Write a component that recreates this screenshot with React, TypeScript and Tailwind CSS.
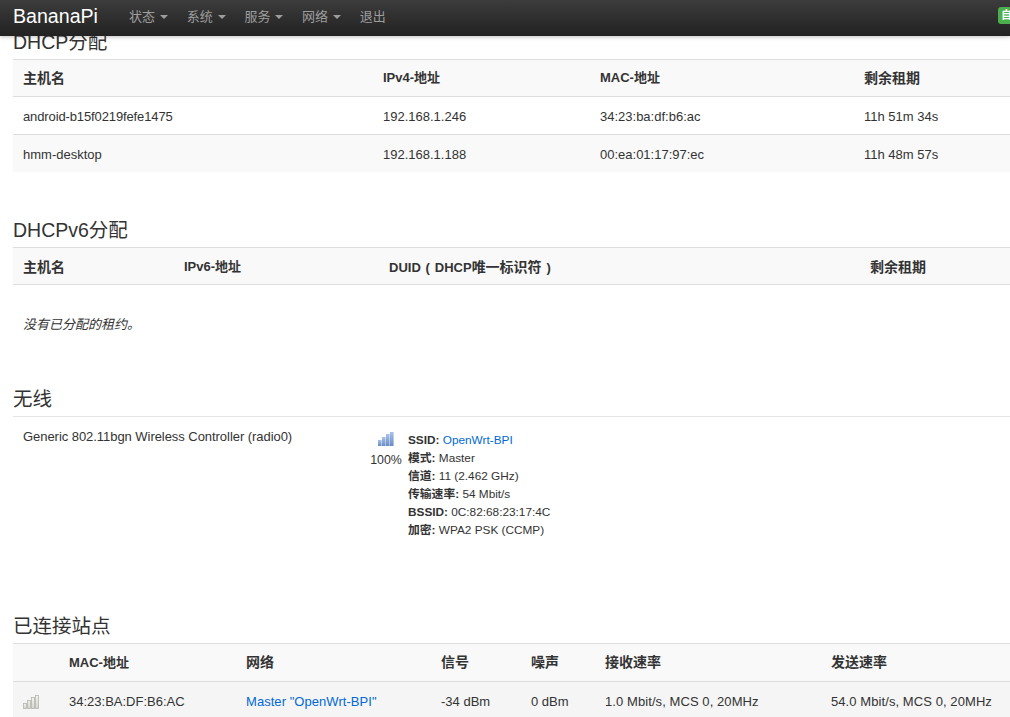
import React from "react";

const font = "font-['Liberation_Sans','Noto_Sans_CJK_SC',sans-serif]";

function Caret() {
  return <span className="ml-[5px] inline-block h-0 w-0 border-x-[4px] border-t-[4px] border-x-transparent border-t-[#9d9d9d] align-middle" />;
}

function Signal({ on }: { on: boolean }) {
  const heights = [6, 9, 12, 14];
  const id = on ? "sigOn" : "sigOff";
  return (
    <svg width="16" height="15" viewBox="0 0 16 15" className="block">
      <defs>
        <linearGradient id={id} x1="0" y1="0" x2="0" y2="1">
          <stop offset="0" stopColor={on ? "#a8c2ea" : "#f4f4f0"} />
          <stop offset="1" stopColor={on ? "#6a8cc4" : "#d2d4cc"} />
        </linearGradient>
      </defs>
      {heights.map((h, i) => (
        <rect
          key={i}
          x={i * 4 + (on ? 0 : 0.5)}
          y={15 - h + (on ? 0 : 0.5)}
          width={on ? 3.6 : 3}
          height={on ? h : h - 1}
          fill={`url(#${id})`}
          stroke={on ? "none" : "#b5b5ae"}
          strokeWidth={on ? 0 : 0.8}
        />
      ))}
    </svg>
  );
}

function Legend({ children, className = "" }: { children: React.ReactNode; className?: string }) {
  return <div className={`h-[30px] text-[19.5px] leading-[26px] text-[#333] ${className}`}>{children}</div>;
}

function Th({ children, cjk, tall, low }: { children?: React.ReactNode; cjk?: boolean; tall?: boolean; low?: boolean }) {
  return (
    <th className={`border-t border-[#ddd] px-[10px] text-left font-bold text-[#333] ${low ? "pt-[2px]" : ""} ${tall ? "h-[38px]" : "h-[37px]"} ${cjk ? "text-[14px]" : "text-[13px]"}`}>
      {children}
    </th>
  );
}

function Td({ children }: { children?: React.ReactNode }) {
  return <td className="h-[38px] border-t border-[#ddd] px-[10px] pt-[2px] text-[13px] text-[#333]">{children}</td>;
}

function Paren({ children }: { children: string }) {
  return <span className="inline-block w-[14px] text-center text-[13px]">{children}</span>;
}

const navItems = ["状态", "系统", "服务", "网络"];

export default function App() {
  return (
    <div className={`relative h-[717px] w-[1010px] overflow-hidden bg-white ${font}`}>
      {/* top bar lies over the scrolled page */}
      <div className="absolute inset-x-0 top-0 z-10 flex h-9 items-center bg-gradient-to-b from-[#3c3c3c] to-[#222] pb-[2px] pl-[13px] shadow-[0_1px_4px_rgba(0,0,0,0.25)]">
        <span className="text-[19.6px] text-white">BananaPi</span>
        <div className="ml-[31px] flex gap-[18.7px] text-[13px] text-[#9d9d9d]">
          {navItems.map((n) => (
            <span key={n} className="flex items-center">
              {n}
              <Caret />
            </span>
          ))}
          <span>退出</span>
        </div>
        <span className="absolute left-[998px] top-[7px] h-[17px] w-5 rounded-[3px] bg-[#4cae4c] pl-[3px] text-[11px] font-bold leading-[17px] text-white">自</span>
      </div>

      <div className="pl-[13px] pt-[29px]">
        <Legend>DHCP分配</Legend>
        <table className="w-[1030px] table-fixed border-separate border-spacing-0">
          <colgroup>
            <col className="w-[360px]" />
            <col className="w-[217px]" />
            <col className="w-[264px]" />
            <col />
          </colgroup>
          <thead>
            <tr className="bg-[#f9f9f9]">
              <Th cjk>主机名</Th>
              <Th>IPv4-地址</Th>
              <Th>MAC-地址</Th>
              <Th cjk>剩余租期</Th>
            </tr>
          </thead>
          <tbody>
            <tr>
              <Td><span className="tracking-[-0.12px]">android-b15f0219fefe1475</span></Td>
              <Td>192.168.1.246</Td>
              <Td>34:23:ba:df:b6:ac</Td>
              <Td>11h 51m 34s</Td>
            </tr>
            <tr className="bg-[#f9f9f9]">
              <Td>hmm-desktop</Td>
              <Td>192.168.1.188</Td>
              <Td>00:ea:01:17:97:ec</Td>
              <Td>11h 48m 57s</Td>
            </tr>
          </tbody>
        </table>

        <Legend className="mt-[45px]">DHCPv6分配</Legend>
        <div className="border-b border-[#ddd]">
          <table className="w-[1030px] table-fixed border-separate border-spacing-0">
            <colgroup>
              <col className="w-[161px]" />
              <col className="w-[205px]" />
              <col className="w-[481px]" />
              <col />
            </colgroup>
            <thead>
              <tr className="bg-[#f9f9f9]">
                <Th low cjk>主机名</Th>
                <Th low>IPv6-地址</Th>
                <Th low>
                  DUID<Paren>(</Paren>DHCP
                  <span className="text-[14px]">唯一标识符</span>
                  <Paren>)</Paren>
                </Th>
                <Th low cjk>剩余租期</Th>
              </tr>
            </thead>
          </table>
        </div>
        <div className="px-[10px] pt-[31px] text-[13px] italic leading-[18px] text-[#333]">没有已分配的租约。</div>

        <Legend className="mt-[51px] !h-[32px] border-b border-[#e5e5e5] pt-[1px]">无线</Legend>
        <div className="flex pt-[10px] text-[13px] text-[#333]">
          <div className="w-[348px] pl-[10px] leading-[20px] tracking-[-0.05px]">Generic 802.11bgn Wireless Controller (radio0)</div>
          <div className="flex">
            <div className="flex w-[47px] flex-col items-center pl-[3px] pt-[4px]">
              <Signal on />
              <span className="mt-[5px] text-[12.4px] leading-[18px]">100%</span>
            </div>
            <div className="pt-[4px] text-[11.8px] leading-[18px]">
              <div><b>SSID:</b> <span className="text-[#0069d6]">OpenWrt-BPI</span></div>
              <div><b>模式:</b> Master</div>
              <div><b>信道:</b> 11 (2.462 GHz)</div>
              <div><b>传输速率:</b> 54 Mbit/s</div>
              <div><b>BSSID:</b> 0C:82:68:23:17:4C</div>
              <div><b>加密:</b> WPA2 PSK (CCMP)</div>
            </div>
          </div>
        </div>

        <Legend className="mt-[74px]">已连接站点</Legend>
        <table className="w-[1030px] table-fixed border-separate border-spacing-0">
          <colgroup>
            <col className="w-[46px]" />
            <col className="w-[177px]" />
            <col className="w-[195px]" />
            <col className="w-[90px]" />
            <col className="w-[74px]" />
            <col className="w-[226px]" />
            <col />
          </colgroup>
          <thead>
            <tr className="bg-[#f9f9f9]">
              <Th tall />
              <Th tall>MAC-地址</Th>
              <Th tall cjk>网络</Th>
              <Th tall cjk>信号</Th>
              <Th tall cjk>噪声</Th>
              <Th tall cjk>接收速率</Th>
              <Th tall cjk>发送速率</Th>
            </tr>
          </thead>
          <tbody>
            <tr className="bg-[#f5f5f5]">
              <Td><Signal on={false} /></Td>
              <Td>34:23:BA:DF:B6:AC</Td>
              <Td><span className="tracking-[0.05px] text-[#0069d6]">Master "OpenWrt-BPI"</span></Td>
              <Td>-34 dBm</Td>
              <Td>0 dBm</Td>
              <Td><span className="tracking-[0.08px]">1.0 Mbit/s, MCS 0, 20MHz</span></Td>
              <Td><span className="tracking-[0.08px]">54.0 Mbit/s, MCS 0, 20MHz</span></Td>
            </tr>
          </tbody>
        </table>
      </div>
    </div>
  );
}
